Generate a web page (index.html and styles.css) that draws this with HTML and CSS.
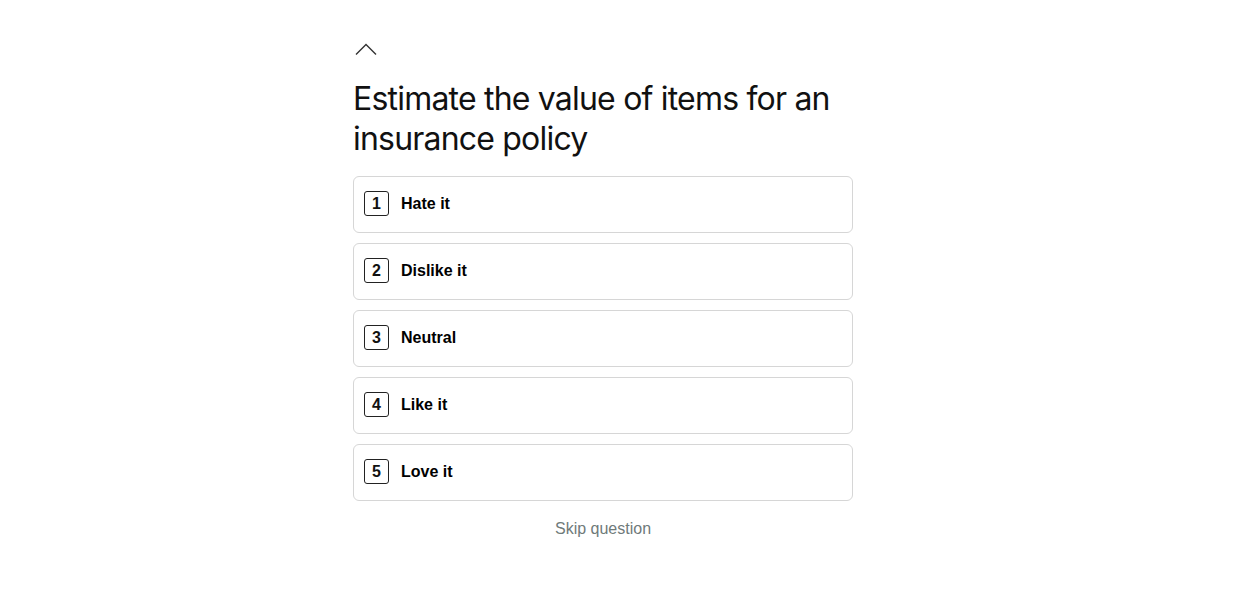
FILE: index.html
```html
<!DOCTYPE html>
<html lang="en">
<head>
<meta charset="utf-8">
<title>Survey question</title>
<link rel="stylesheet" href="styles.css">
</head>
<body>
<main class="survey">
  <button class="back" aria-label="Previous question">
    <svg width="22" height="12" viewBox="0 0 22 12" fill="none"><path d="M1 11.5L11 1.5L21 11.5" stroke="#333" stroke-width="1.4"/></svg>
  </button>
  <h1 class="title">Estimate the value of items for an insurance policy</h1>
  <ul class="options">
    <li class="option"><span class="key">1</span><span class="label">Hate it</span></li>
    <li class="option"><span class="key">2</span><span class="label">Dislike it</span></li>
    <li class="option"><span class="key">3</span><span class="label">Neutral</span></li>
    <li class="option"><span class="key">4</span><span class="label">Like it</span></li>
    <li class="option"><span class="key">5</span><span class="label">Love it</span></li>
  </ul>
  <button class="skip">Skip question</button>
</main>
</body>
</html>
```
FILE: styles.css
```css
* { box-sizing: border-box; }
html, body { margin: 0; padding: 0; background: #fff; }
body {
  font-family: "Liberation Sans", Arial, sans-serif;
  color: #000;
  padding-right: 32px;
}
.survey {
  width: 500px;
  margin: 0 auto;
  padding-top: 43px;
  display: flex;
  flex-direction: column;
}
.back {
  align-self: flex-start;
  background: none;
  border: 0;
  padding: 0 0 0 2px;
  margin: 0;
  height: 13px;
  display: flex;
  cursor: pointer;
}
.title {
  font-family: Inter, "Liberation Sans", sans-serif;
  font-weight: 400;
  font-size: 32px;
  line-height: 40px;
  letter-spacing: -0.8px;
  margin: 23px 0 0;
  color: #111;
}
.options {
  list-style: none;
  margin: 17px 0 0;
  padding: 0;
  display: flex;
  flex-direction: column;
  gap: 10px;
}
.option {
  height: 57px;
  border: 1px solid #d6d6d6;
  border-radius: 6px;
  display: flex;
  align-items: center;
  padding: 0 0 2px 10px;
  gap: 12px;
}
.key {
  width: 25px;
  height: 25px;
  border: 1px solid #222;
  border-radius: 3px;
  display: flex;
  align-items: center;
  justify-content: center;
  font-weight: 700;
  font-size: 16px;
  color: #111;
}
.label {
  font-weight: 700;
  font-size: 16px;
}
.skip {
  align-self: center;
  margin-top: 19px;
  background: none;
  border: 0;
  padding: 0;
  font-family: "Liberation Sans", Arial, sans-serif;
  font-size: 16px;
  color: #6f7a7a;
  cursor: pointer;
}
```
